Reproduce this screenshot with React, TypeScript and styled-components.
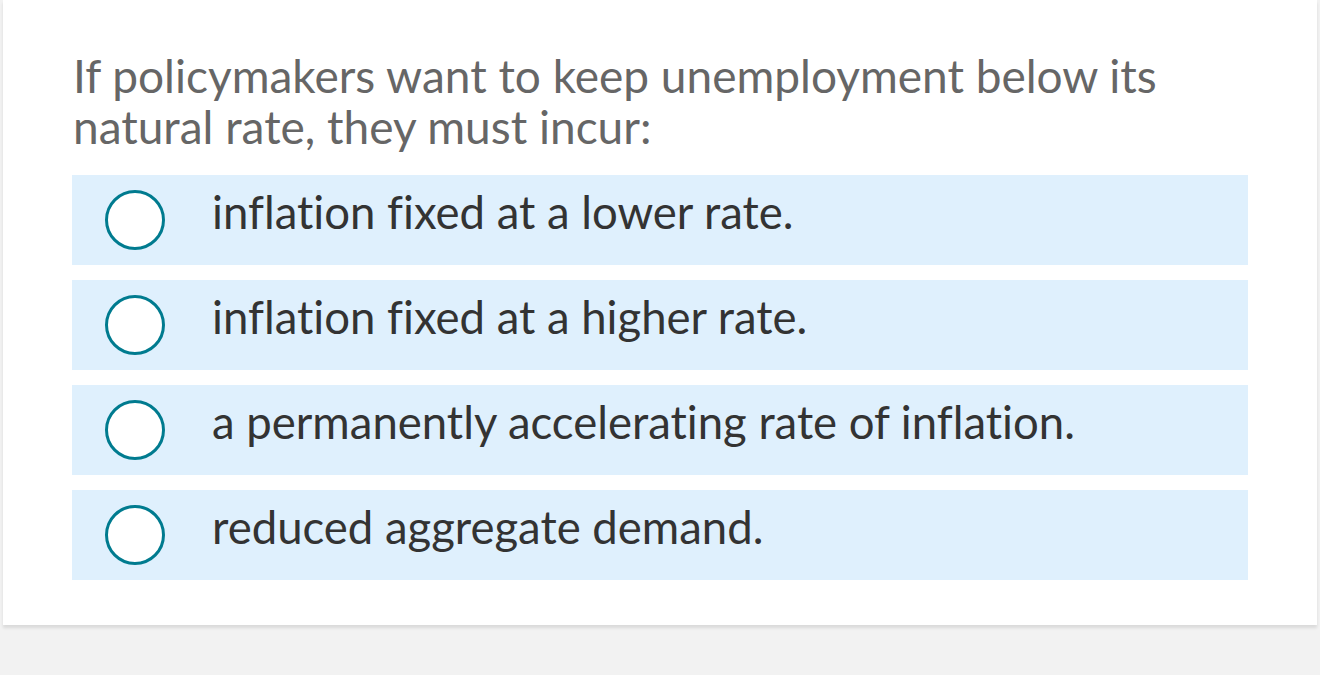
import React from "react";
import styled, { createGlobalStyle } from "styled-components";

const Global = createGlobalStyle`
  html, body { margin: 0; padding: 0; background: #f2f2f2; }
  body { font-family: "Lato", "Noto Sans", sans-serif; }
`;

const Page = styled.div`
  width: 1320px;
  height: 675px;
  background: #f2f2f2;
  padding: 0 3px;
  box-sizing: border-box;
`;

const Card = styled.div`
  background: #ffffff;
  height: 625px;
  box-sizing: border-box;
  padding: 50px 69px 0 69px;
  box-shadow: 0 3px 3px rgba(0, 0, 0, 0.1);
`;

const Question = styled.div`
  font-family: "Lato", sans-serif;
  font-size: 46px;
  line-height: 51px;
  color: #666666;
  margin: 0 0 23px 1px;
  font-variant-ligatures: none;
`;

const Options = styled.div`
  display: flex;
  flex-direction: column;
  gap: 15px;
`;

const Option = styled.label`
  display: flex;
  align-items: center;
  height: 90px;
  background: #dff0fd;
  padding-left: 33px;
  box-sizing: border-box;
  cursor: pointer;
`;

const Radio = styled.span`
  width: 60px;
  height: 60px;
  border-radius: 50%;
  border: 3.5px solid #007b8f;
  background: #ffffff;
  box-sizing: border-box;
  flex-shrink: 0;
  margin-right: 47px;
`;

const OptionText = styled.span`
  font-family: "Lato", sans-serif;
  font-size: 45.5px;
  color: #333333;
  line-height: 1;
  margin-bottom: 17px;
  font-variant-ligatures: none;
`;

const options = [
  "inflation fixed at a lower rate.",
  "inflation fixed at a higher rate.",
  "a permanently accelerating rate of inflation.",
  "reduced aggregate demand.",
];

export default function App() {
  return (
    <Page>
      <Global />
      <Card>
        <Question>
          If policymakers want to keep unemployment below its
          <br />
          natural rate, they must incur:
        </Question>
        <Options>
          {options.map((o) => (
            <Option key={o}>
              <Radio />
              <OptionText>{o}</OptionText>
            </Option>
          ))}
        </Options>
      </Card>
    </Page>
  );
}
